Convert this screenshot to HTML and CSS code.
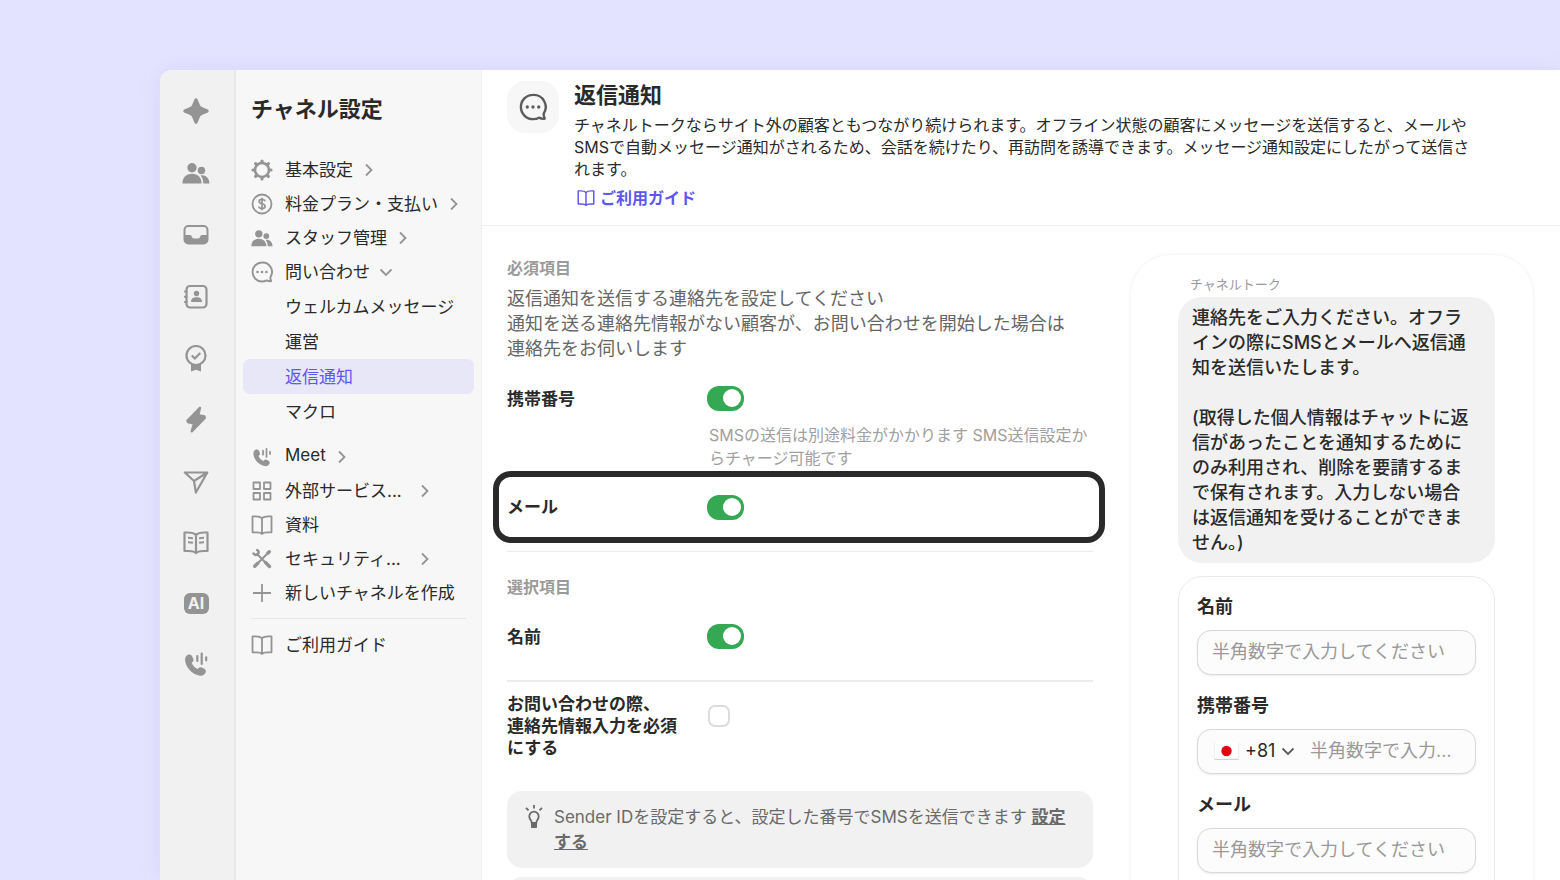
FILE: index.html
```html
<!DOCTYPE html>
<html lang="ja">

<head>
    <meta charset="UTF-8">
    <meta name="viewport" content="width=device-width, initial-scale=1.0">
    <title>返信通知</title>
    <link rel="stylesheet" href="styles.css">
</head>

<body>
    <!-- shared icons -->
    <svg class="sprite" aria-hidden="true">
        <symbol id="i-people" viewBox="0 0 28 28">
            <g fill="currentColor">
                <circle cx="10" cy="8.7" r="4.7" />
                <circle cx="19.5" cy="11.5" r="3.7" />
                <path d="M.4 24.5C.4 18.5 4.400 14.800 10 14.800s9.600 3.700 9.600 9.700z" />
                <path d="M21.300 24.500c0-3.200-.9-5.800-2.700-8 4.700-.9 8.800 2.500 8.800 8z" />
            </g>
        </symbol>
        <symbol id="i-phone" viewBox="0 0 28 28">
            <path fill="currentColor" d="M5.600 4.900c1.800-.9 3.700-.3 4.500 1.300l1.200 2.600c.5 1.200.3 2.300-.7 3.100l-1 .8c1.200 2.900 3.200 5 6.100 6.400l.9-1c.9-1 2-1.200 3.200-.6l2.500 1.300c1.500.8 2 2.300 1.200 3.900-1.300 2.500-3.500 3.500-6.300 2.900C10.300 24 4.300 18 3.200 11.200c-.4-2.900.3-5.200 2.400-6.300z" />
            <path stroke="currentColor" stroke-width="2.2" stroke-linecap="round" d="M15.300 6v5M19.700 3.500v10.500M24.200 7.300v3" />
        </symbol>
        <symbol id="i-chat" viewBox="0 0 22 22">
            <path fill="none" stroke="currentColor" stroke-width="1.9" stroke-linejoin="round" d="M11 1.500a9.500 9.500 0 1 0 0 19c1.800 0 3.300-.3 4.700-1.100 1.500.8 2.900 1 4.200.9.300 0 .3-.4.200-.6-.5-1-.8-2.200-.7-3.500A9.500 9.500 0 0 0 11 1.500z" />
            <g fill="currentColor">
                <circle cx="6.500" cy="11" r="1.300" />
                <circle cx="11" cy="11" r="1.300" />
                <circle cx="15.500" cy="11" r="1.300" />
            </g>
        </symbol>
        <symbol id="i-book" viewBox="0 0 22 22">
            <path fill="none" stroke="currentColor" stroke-width="1.8" stroke-linejoin="round" d="M11 4.200C9.600 2.700 7.500 2.300 4.500 2.300H1.500v16h4c2.500 0 4.500.2 5.500 1.700 1-1.500 3-1.700 5.500-1.700h4v-16h-3c-3 0-5.100.4-6.500 1.900zM11 4.200V20" />
        </symbol>
        <symbol id="i-right" viewBox="0 0 16 16">
            <path fill="none" stroke="currentColor" stroke-width="1.8" d="M5 2.500L10.500 8 5 13.500" />
        </symbol>
        <symbol id="i-down" viewBox="0 0 16 16">
            <path fill="none" stroke="currentColor" stroke-width="1.800" d="M2.500 5.500L8 11l5.500-5.500" />
        </symbol>
    </svg>

    <div class="app">
        <nav class="rail" aria-label="メインメニュー">
            <div class="rail-group">
                <button aria-label="ホーム"><svg viewBox="0 0 28 28"><path fill="currentColor" d="M14 1.300c.8 0 1.300.5 1.700 1.500l2 4.700c.6 1.400 1.400 2.200 2.800 2.800l4.700 2c1 .4 1.500.9 1.500 1.700s-.5 1.300-1.500 1.700l-4.700 2c-1.400.6-2.200 1.400-2.800 2.800l-2 4.700c-.4 1-.9 1.500-1.700 1.500s-1.300-.5-1.700-1.500l-2-4.700c-.6-1.400-1.400-2.200-2.800-2.800l-4.700-2c-1-.4-1.500-.9-1.500-1.700s.5-1.300 1.500-1.700l4.700-2c1.400-.6 2.200-1.400 2.800-2.800l2-4.700c.4-1 .9-1.500 1.700-1.500z" /></svg></button>
                <button aria-label="顧客"><svg><use href="#i-people" /></svg></button>
                <button aria-label="受信箱"><svg viewBox="0 0 28 28"><rect x="2.500" y="5" width="23" height="17.500" rx="4" fill="none" stroke="currentColor" stroke-width="2" /><path fill="currentColor" d="M2.500 14h5.500c1 0 1.300.5 1.700 1.500.5 1.300 1 1.900 2.200 1.900h4.200c1.200 0 1.700-.6 2.200-1.900.4-1 .7-1.500 1.700-1.500h5.500v4.500a4 4 0 0 1-4 4h-15a4 4 0 0 1-4-4z" /></svg></button>
                <button aria-label="連絡先"><svg viewBox="0 0 28 28"><rect x="4.500" y="3" width="20" height="21.500" rx="3.500" fill="none" stroke="currentColor" stroke-width="2.200" /><path stroke="currentColor" stroke-width="2.200" stroke-linecap="round" d="M3 8.500h1.500M3 13.800h1.500M3 19h1.500" /><circle cx="14.500" cy="10.500" r="2.700" fill="currentColor" /><path fill="currentColor" d="M9 19c0-3.500 2.300-4.700 5.500-4.700S20 15.500 20 19z" /></svg></button>
                <button aria-label="実績"><svg viewBox="0 0 28 28"><g fill="none" stroke="currentColor" stroke-width="2.200"><circle cx="14" cy="10.500" r="9.500" /><path d="M9.800 10.500l3 3 5.500-5.500" /></g><path fill="currentColor" d="M9 19v7.500l5-1.800 5 1.800V19c-3 1.500-7 1.500-10 0z" /></svg></button>
            </div>
            <div class="rail-group rail-tools">
                <button aria-label="自動化"><svg viewBox="0 0 28 28"><path fill="currentColor" stroke="currentColor" stroke-width="2.400" stroke-linejoin="round" d="M18 1.800L5.500 14.500l.4 1.500 6.100 1.500-2.300 7.800L22.800 12l-.4-1.600-6.100-1.300z" /></svg></button>
                <button aria-label="マーケティング"><svg viewBox="0 0 28 28"><path fill="none" stroke="currentColor" stroke-width="2.200" stroke-linejoin="round" d="M2.800 5.500h22.500L13.900 25.500 12 14zM12 14L25.300 5.500" /></svg></button>
                <button aria-label="ドキュメント"><svg viewBox="0 0 28 28"><path fill="none" stroke="currentColor" stroke-width="2.200" stroke-linejoin="round" d="M14 7C12.200 5 9.500 4.500 5.500 4.500H2.500V23h4.500c3 0 5.500.3 7 2.200 1.500-1.900 4-2.200 7-2.200h4.500V4.500h-3c-4 0-6.700.5-8.500 2.500zM14 7v18" /><path stroke="currentColor" stroke-width="2" d="M6 9.800c2 0 3.500.1 5 .6M6 14.200c2 0 3.500.1 5 .6M22 9.800c-2 0-3.500.1-5 .6M22 14.200c-2 0-3.500.1-5 .6" fill="none" /></svg></button>
                <button aria-label="AI"><span class="ai-mark">AI</span></button>
                <button aria-label="通話"><svg><use href="#i-phone" /></svg></button>
            </div>
        </nav>

        <aside class="sidebar">
            <h2 class="sidebar-title">チャネル設定</h2>
            <nav aria-label="チャネル設定">
                <ul class="menu">
                    <li><a href="#"><svg class="icon" viewBox="0 0 22 22"><circle cx="11" cy="11" r="7" fill="none" stroke="currentColor" stroke-width="2.600" /><path stroke="currentColor" stroke-width="3.200" stroke-linecap="round" d="M11 2v1M11 19v1M2 11h1M19 11h1M4.700 4.700l.6.6M16.700 16.700l.6.6M4.700 17.300l.6-.6M16.700 5.300l.6-.6" /></svg>基本設定<svg class="chevron"><use href="#i-right" /></svg></a></li>
                    <li><a href="#"><svg class="icon" viewBox="0 0 22 22"><g fill="none" stroke="currentColor"><circle cx="11" cy="11" r="9.500" stroke-width="1.800" /><path stroke-width="1.700" d="M14 8.300c-.3-1.300-1.500-1.900-3-1.900-1.700 0-2.900.8-2.900 2.100 0 1.500 1.300 1.900 2.900 2.300 1.700.4 3.100.9 3.100 2.500 0 1.500-1.300 2.300-3.100 2.300-1.700 0-3-.7-3.200-2.100M11 4.700v12.600" /></g></svg>料金プラン・支払い<svg class="chevron"><use href="#i-right" /></svg></a></li>
                    <li><a href="#"><svg class="icon"><use href="#i-people" /></svg>スタッフ管理<svg class="chevron"><use href="#i-right" /></svg></a></li>
                    <li>
                        <a href="#"><svg class="icon"><use href="#i-chat" /></svg>問い合わせ<svg class="chevron"><use href="#i-down" /></svg></a>
                        <ul class="submenu">
                            <li><a href="#">ウェルカムメッセージ</a></li>
                            <li><a href="#">運営</a></li>
                            <li><a href="#" class="active" aria-current="page">返信通知</a></li>
                            <li><a href="#">マクロ</a></li>
                        </ul>
                    </li>
                </ul>
                <ul class="menu">
                    <li><a href="#"><svg class="icon"><use href="#i-phone" /></svg>Meet<svg class="chevron"><use href="#i-right" /></svg></a></li>
                    <li><a href="#"><svg class="icon" viewBox="0 0 22 22"><path fill="none" stroke="currentColor" stroke-width="1.800" stroke-linejoin="round" d="M2.500 2.500h6.500v6.500H2.500zM13 2.500h6.500v6.500H13zM2.500 13h6.500v6.500H2.500zM13 13h6.500v6.500H13z" /></svg><span class="clipped">外部サービス...</span><svg class="chevron"><use href="#i-right" /></svg></a></li>
                    <li><a href="#"><svg class="icon"><use href="#i-book" /></svg>資料</a></li>
                    <li><a href="#"><svg class="icon" viewBox="0 0 22 22"><g fill="none" stroke="currentColor" stroke-linecap="round"><path stroke-width="2" d="M6 6l10 10M16.500 5.500L5 17" /><path stroke-width="3.400" d="M14.500 14.500l4 4M17 5l1.300-1.300M3.700 18.300l3-3" /><path stroke-width="2.600" d="M2.600 5.600c1 1.500 3 1.700 4.200.5s1-3.200-.5-4" /></g></svg><span class="clipped">セキュリティ...</span><svg class="chevron"><use href="#i-right" /></svg></a></li>
                    <li><a href="#"><svg class="icon" viewBox="0 0 22 22"><path stroke="currentColor" stroke-width="1.800" d="M11 2v18M2 11h18" /></svg>新しいチャネルを作成</a></li>
                </ul>
                <hr class="sidebar-line">
                <ul class="menu">
                    <li><a href="#"><svg class="icon"><use href="#i-book" /></svg>ご利用ガイド</a></li>
                </ul>
            </nav>
        </aside>

        <main class="content">
            <header class="page-header">
                <div class="page-icon"><svg><use href="#i-chat" /></svg></div>
                <div class="page-intro">
                    <h1>返信通知</h1>
                    <p>チャネルトークならサイト外の顧客ともつながり続けられます。オフライン状態の顧客にメッセージを送信すると、メールやSMSで自動メッセージ通知がされるため、会話を続けたり、再訪問を誘導できます。メッセージ通知設定にしたがって送信されます。</p>
                    <a href="#" class="guide-link"><svg><use href="#i-book" /></svg>ご利用ガイド</a>
                </div>
            </header>

            <div class="columns">
                <form class="settings">
                    <h3>必須項目</h3>
                    <p class="lead">返信通知を送信する連絡先を設定してください<br>通知を送る連絡先情報がない顧客が、お問い合わせを開始した場合は<br>連絡先をお伺いします</p>
                    <div class="row row-phone">
                        <label for="use-phone">携帯番号</label>
                        <input type="checkbox" role="switch" class="switch" id="use-phone" checked>
                        <p class="hint">SMSの送信は別途料金がかかります SMS送信設定からチャージ可能です</p>
                    </div>
                    <div class="row highlight">
                        <label for="use-mail">メール</label>
                        <input type="checkbox" role="switch" class="switch" id="use-mail" checked>
                    </div>
                    <hr class="thin">
                    <h3>選択項目</h3>
                    <div class="row row-name">
                        <label for="use-name">名前</label>
                        <input type="checkbox" role="switch" class="switch" id="use-name" checked>
                    </div>
                    <hr>
                    <div class="row row-required">
                        <label for="require-contact">お問い合わせの際、<br>連絡先情報入力を必須にする</label>
                        <input type="checkbox" class="tick" id="require-contact">
                    </div>
                    <div class="notice">
                        <svg viewBox="0 0 18 24"><g fill="none" stroke="currentColor" stroke-width="1.800"><path d="M9 6.700a4.700 4.700 0 0 0-4.700 4.800c0 1.600.7 2.600 1.500 3.700.6.800.9 1.600.9 2.600h4.600c0-1 .3-1.800.9-2.600.8-1.100 1.500-2.100 1.500-3.700A4.700 4.700 0 0 0 9 6.700z" /><path d="M9 0v3.500M1 2.800l2.500 2.500M17 2.800l-2.500 2.500" /></g><path fill="currentColor" d="M6 17.500h6v4.300c0 .8-.5 1.200-1.200 1.200H7.200c-.7 0-1.200-.4-1.200-1.200z" /></svg>
                        <p>Sender IDを設定すると、設定した番号でSMSを送信できます <a href="#">設定する</a></p>
                    </div>
                    <div class="notice"></div>
                </form>

                <section class="preview">
                    <p class="sender">チャネルトーク</p>
                    <p class="bubble">連絡先をご入力ください。オフラ<br>インの際にSMSとメールへ返信通<br>知を送信いたします。<br><br>(取得した個人情報はチャットに返<br>信があったことを通知するために<br>のみ利用され、削除を要請するま<br>で保有されます。入力しない場合<br>は返信通知を受けることができま<br>せん。)</p>
                    <form class="contact-card">
                        <label for="name">名前</label>
                        <input type="text" class="field" id="name" placeholder="半角数字で入力してください">
                        <label for="phone">携帯番号</label>
                        <div class="field phone-field">
                            <svg class="flag" viewBox="0 0 24 17"><rect width="24" height="17" fill="#fff" /><path d="M0 16.500h24" stroke="#ccc" /><path d="M.5 0v17M23.500 0v17" stroke="#eee" /><circle cx="12" cy="8.500" r="5" fill="#e60012" /></svg>
                            <select aria-label="国番号">
                                <option>+81</option>
                            </select>
                            <svg class="caret"><use href="#i-down" /></svg>
                            <input type="tel" id="phone" placeholder="半角数字で入力してください">
                        </div>
                        <label for="mail">メール</label>
                        <input type="email" class="field" id="mail" placeholder="半角数字で入力してください">
                    </form>
                </section>
            </div>
        </main>
    </div>
</body>

</html>
```
FILE: styles.css
```css
* {
    box-sizing: border-box;
}

body {
    margin: 0;
    height: 100vh;
    padding: 70px 0 0 160px;
    overflow: hidden;
    background-color: #e4e3ff;
    color: #2a2a2a;
    font-family: Inter, "Noto Sans CJK JP", sans-serif;
    font-size: 17px;
}

h1, h2, h3, p, ul {
    margin: 0;
    padding: 0;
}

ul {
    list-style: none;
}

a {
    color: inherit;
    text-decoration: none;
}

button, input, select {
    font-family: inherit;
}

hr {
    height: 2px;
    margin: 0;
    border: none;
    background-color: #ececec;
}

.sprite {
    display: none;
}

.app {
    display: flex;
    height: 100%;
    overflow: hidden;
    border-top-left-radius: 12px;
    background-color: #fff;
    box-shadow: 0 0 24px rgba(70, 60, 160, 0.08);
}

/* Icon rail */
.rail {
    flex: none;
    width: 76px;
    padding: 27px 0 0 22px;
    background-color: #f1f1f1;
    border-right: 2px solid #e8e8e8;
}

.rail-group {
    display: flex;
    flex-direction: column;
    gap: 34px;
}

.rail-tools {
    gap: 33px;
    margin-top: 33px;
}

.rail button {
    display: flex;
    align-items: center;
    justify-content: center;
    width: 28px;
    height: 28px;
    padding: 0;
    border: none;
    background: none;
    color: #949494;
    cursor: pointer;
}

.rail svg {
    width: 28px;
    height: 28px;
}

.ai-mark {
    width: 25px;
    height: 21px;
    border-radius: 6px;
    background-color: #949494;
    color: #f1f1f1;
    font-size: 16px;
    font-weight: 700;
    line-height: 21px;
    text-align: center;
}

/* Sidebar */
.sidebar {
    flex: none;
    width: 246px;
    padding: 24px 7px 0;
    background-color: #f7f7f7;
    border-right: 1px solid #f0f0f0;
}

.sidebar-title {
    margin: 0 8px 28px;
    font-size: 22px;
    line-height: 30px;
}

.menu + .menu {
    margin-top: 10px;
}

.menu a {
    display: flex;
    align-items: center;
    height: 34px;
    padding: 0 0 2px 8px;
    border-radius: 7px;
    white-space: nowrap;
}

.icon, .chevron {
    flex: none;
    margin-top: 3px;
    color: #949494;
}

.icon {
    width: 22px;
    height: 22px;
    margin-right: 12px;
}

.chevron {
    width: 16px;
    height: 16px;
    margin-left: 8px;
}

.clipped {
    width: 124px;
}

.submenu {
    margin-top: 1px;
}

.menu .submenu a {
    height: 35px;
    padding-left: 42px;
}

.submenu .active {
    background-color: #e8e7f8;
    color: #5e56f0;
}

.sidebar-line {
    height: 1px;
    margin: 9px 8px 8px;
    background-color: #e6e6e6;
}

/* Page header */
.content {
    flex: 1;
    min-width: 0;
}

.page-header {
    display: flex;
    gap: 15px;
    padding: 11px 25px 15px;
    border-bottom: 1px solid #f0f0f0;
}

.page-icon {
    display: flex;
    flex: none;
    align-items: center;
    justify-content: center;
    width: 52px;
    height: 52px;
    border-radius: 18px;
    background-color: #f7f7f7;
    color: #5c5c5c;
}

.page-icon svg {
    width: 28px;
    height: 28px;
}

.page-intro {
    max-width: 900px;
}

.page-intro h1 {
    margin-bottom: 5px;
    font-size: 22px;
    line-height: 28px;
}

.page-intro p {
    font-size: 16px;
    line-height: 22px;
}

.guide-link {
    display: flex;
    align-items: center;
    gap: 5px;
    width: fit-content;
    margin-top: 6px;
    padding-left: 3px;
    color: #5e56f0;
    font-size: 16px;
    font-weight: 700;
    line-height: 24px;
}

.guide-link svg {
    width: 18px;
    height: 18px;
}

/* Settings form */
.columns {
    display: grid;
    grid-template-columns: minmax(0, 1fr) 402px;
    gap: 38px;
    padding: 29px 27px 0 25px;
}

.settings {
    padding-top: 2px;
}

.settings h3 {
    color: #9a9a9a;
    font-size: 16px;
    line-height: 22px;
}

.lead {
    margin-top: 7px;
    color: #666;
    font-size: 18px;
    line-height: 25px;
}

.row {
    display: grid;
    grid-template-columns: 200px minmax(0, 1fr);
    align-items: center;
}

.row label {
    padding-right: 24px;
    font-weight: 700;
    line-height: 22px;
}

.row-phone {
    margin-top: 25px;
}

.switch {
    width: 37px;
    height: 25px;
    margin: 0;
    padding: 3px;
    appearance: none;
    border-radius: 12px;
    background-color: #ccc;
    cursor: pointer;
}

.switch::before {
    content: "";
    display: block;
    width: 18px;
    height: 18px;
    border-radius: 50%;
    background-color: #fff;
}

.switch:checked {
    background-color: #34a853;
}

.switch:checked::before {
    margin-left: auto;
}

.hint {
    grid-column: 2;
    margin-top: 13px;
    padding-left: 2px;
    color: #a0a0a0;
    font-size: 16px;
    line-height: 23px;
}

.highlight {
    height: 72px;
    margin: 1px -12px 8px -14px;
    padding: 0 8px;
    border: 6px solid #2a2a2a;
    border-radius: 18px;
}

.thin {
    height: 1px;
    margin-bottom: 24px;
}

.row-name {
    margin: 26px 0 31px;
}

.row-required {
    align-items: start;
    margin: 11px 0 32px;
}

.tick {
    width: 22px;
    height: 22px;
    margin: 12px 1px 0;
    appearance: none;
    border: 2px solid #dcdcdc;
    border-radius: 7px;
    background-color: #fff;
}

.tick:checked {
    background-color: #34a853;
}

.notice {
    display: flex;
    align-items: flex-start;
    gap: 11px;
    min-height: 77px;
    margin-bottom: 9px;
    padding: 14px 18px 13px;
    border-radius: 15px;
    background-color: #f1f1f1;
    color: #6a6a6a;
    line-height: 25px;
}

.notice svg {
    flex: none;
    width: 18px;
    height: 24px;
}

.notice a {
    font-weight: 700;
    text-decoration: underline;
}

/* Chat preview */
.preview {
    height: 100vh;
    padding: 18px 38px 0 47px;
    border-radius: 40px;
    box-shadow: 0 0 4px rgba(0, 0, 0, 0.08);
}

.sender {
    margin-bottom: 2px;
    padding-left: 12px;
    color: #9a9a9a;
    font-size: 13px;
    line-height: 22px;
}

.bubble {
    padding: 8px 14px;
    border-radius: 24px;
    background-color: #f1f1f1;
    font-size: 18px;
    font-weight: 500;
    line-height: 25px;
    white-space: nowrap;
}

.contact-card {
    height: 400px;
    margin-top: 13px;
    padding: 16px 18px;
    border: 1px solid #ebebeb;
    border-radius: 24px;
}

.contact-card label {
    display: block;
    margin-bottom: 9px;
    font-size: 18px;
    font-weight: 700;
    line-height: 28px;
}

.field {
    display: block;
    width: 100%;
    height: 45px;
    margin-bottom: 17px;
    padding: 0 14px 2px;
    border: 1px solid #d9d9d9;
    border-radius: 14px;
    background-color: #fcfcfc;
    box-shadow: 0 1px 2px rgba(0, 0, 0, 0.08);
    font-size: 18px;
}

.field::placeholder, .phone-field input::placeholder {
    color: #999;
}

.phone-field {
    display: flex;
    align-items: center;
}

.flag {
    flex: none;
    width: 25px;
    height: 18px;
    margin: 0 6px 0 2px;
}

.phone-field select {
    flex: none;
    padding: 0;
    appearance: none;
    border: none;
    background: none;
    color: #2a2a2a;
    font-size: 18px;
}

.caret {
    flex: none;
    width: 16px;
    height: 16px;
    margin: 0 14px 0 4px;
    color: #5c5c5c;
}

.phone-field input {
    flex: 1;
    min-width: 0;
    padding: 0;
    border: none;
    background: none;
    font-size: 18px;
    text-overflow: ellipsis;
}
```
